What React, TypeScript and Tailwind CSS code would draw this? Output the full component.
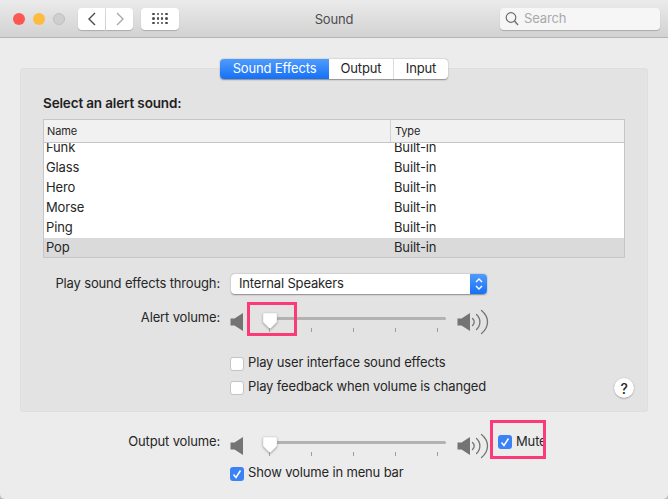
const rows = ["Funk", "Glass", "Hero", "Morse", "Ping", "Pop"];

function SpeakerLow() {
  return (
    <svg width="14" height="20" viewBox="0 0 14 20" className="shrink-0">
      <path d="M0.5 6.5H4.5L13 1V19L4.5 13.5H0.5Z" fill="#747474" />
    </svg>
  );
}

function SpeakerHigh() {
  return (
    <svg width="32" height="26" viewBox="0 0 32 26" className="shrink-0">
      <path d="M0.5 9.5H4.5L13 4V22L4.5 16.5H0.5Z" fill="#747474" />
      <path d="M15.5 9.5C17.8 11.5 17.8 14.5 15.5 16.5" fill="none" stroke="#747474" strokeWidth="1.3" strokeLinecap="round" />
      <path d="M19.5 5.5C24 9.5 24 16.5 19.5 20.5" fill="none" stroke="#747474" strokeWidth="1.3" strokeLinecap="round" />
      <path d="M24.5 1.5C32.5 8 32.5 18 24.5 24.5" fill="none" stroke="#747474" strokeWidth="1.3" strokeLinecap="round" />
    </svg>
  );
}

function Slider() {
  return (
    <div className="relative w-[184px] h-[20px] shrink-0">
      <div className="absolute left-[6px] right-0 top-[5px] h-[3px] rounded-full bg-[#b2b2b2]" />
      <svg width="16" height="18" viewBox="0 0 16 18" className="absolute left-0 top-0 drop-shadow-[0_1px_1px_rgba(0,0,0,0.3)]">
        <path d="M2 1H14Q15 1 15 2V10L8 17L1 10V2Q1 1 2 1Z" fill="#ffffff" stroke="#d0d0d0" strokeWidth="0.5" />
      </svg>
      <div className="absolute left-[7px] right-[8px] top-[16px] flex justify-between">
        {[0, 1, 2, 3, 4].map((i) => (
          <div key={i} className="w-px h-[4px] bg-[#9c9c9c]" />
        ))}
      </div>
    </div>
  );
}

function VolumeRow() {
  return (
    <div className="flex items-center">
      <SpeakerLow />
      <div className="ml-[18px] mr-[11px]">
        <Slider />
      </div>
      <SpeakerHigh />
    </div>
  );
}

function Check({ checked, label }: { checked?: boolean; label: string }) {
  return (
    <div className="flex items-center gap-[4px] h-[16px]">
      {checked ? (
        <div className="w-[14px] h-[14px] rounded-[3px] bg-[#3b82f7] flex items-center justify-center shrink-0">
          <svg width="10" height="10" viewBox="0 0 10 10">
            <path d="M1.5 5.5L4 8.5L8.5 1.5" fill="none" stroke="#ffffff" strokeWidth="1.5" />
          </svg>
        </div>
      ) : (
        <div className="w-[14px] h-[14px] rounded-[3px] bg-white border border-[#c4c4c4] shrink-0" />
      )}
      <span className="whitespace-nowrap mb-[2px]">{label}</span>
    </div>
  );
}

export default function App() {
  return (
    <div className="w-[668px] h-[499px] bg-[#c9baac]">
      <div
        className="relative w-[668px] h-[499px] overflow-hidden bg-[#ececec] text-[13px] tracking-[-0.15px] text-[#262626] rounded-b-[5px]"
        style={{ fontFamily: "Inter, 'Liberation Sans', sans-serif" }}
      >
        {/* Title bar */}
        <div className="relative h-[38px] flex items-center pl-[13px] pr-[8px] bg-gradient-to-b from-[#ebebeb] to-[#d2d2d2] border-b border-[#b4b4b4]">
          <div className="flex items-center gap-[8px]">
            <div className="w-[12px] h-[12px] rounded-full bg-[#fc5753]" />
            <div className="w-[12px] h-[12px] rounded-full bg-[#fdbc40]" />
            <div className="w-[12px] h-[12px] rounded-full bg-[#cfcfcf] border border-[#bfbfbf]" />
          </div>
          <div className="flex ml-[13px] gap-px">
            <div className="w-[27px] h-[22px] bg-white rounded-l-[4px] shadow-[0_1px_1px_rgba(0,0,0,0.2)] flex items-center justify-center">
              <svg width="10" height="14" viewBox="0 0 10 14">
                <path d="M8 1L2 7L8 13" fill="none" stroke="#4a4a4a" strokeWidth="1.4" />
              </svg>
            </div>
            <div className="w-[27px] h-[22px] bg-white rounded-r-[4px] shadow-[0_1px_1px_rgba(0,0,0,0.2)] flex items-center justify-center">
              <svg width="10" height="14" viewBox="0 0 10 14">
                <path d="M2 1L8 7L2 13" fill="none" stroke="#a8a8a8" strokeWidth="1.4" />
              </svg>
            </div>
          </div>
          <div className="ml-[8px] w-[38px] h-[22px] bg-white rounded-[4px] shadow-[0_1px_1px_rgba(0,0,0,0.2)] grid grid-cols-[repeat(4,2.5px)] auto-rows-[2.5px] gap-[1.8px] content-center justify-center">
            {Array.from({ length: 12 }).map((_, i) => (
              <div key={i} className="rounded-full bg-[#4a4a4a]" />
            ))}
          </div>
          <div className="absolute left-0 right-0 mt-[2px] text-center text-[#4d4d4d]">Sound</div>
          <div className="relative ml-auto w-[160px] h-[22px] bg-[#f6f6f6] rounded-[4px] shadow-[0_1px_1px_rgba(0,0,0,0.2)] flex items-center pl-[5px] gap-[5px]">
            <svg width="14" height="15" viewBox="0 0 14 15">
              <circle cx="6" cy="6.5" r="4.8" fill="none" stroke="#6e6e6e" strokeWidth="1.2" />
              <path d="M9.5 10L13 14" stroke="#6e6e6e" strokeWidth="1.3" />
            </svg>
            <span className="text-[#a9a9a9] mt-[1px]">Search</span>
          </div>
        </div>

        {/* Tabbed panel */}
        <div className="relative mx-[20px] mt-[30px] h-[344px] bg-[#e3e3e3] rounded-[4px] px-[23px] shadow-[inset_0_0_0_1px_#dfdfdf]">
          <div className="absolute left-[200px] top-[-9px] h-[20px] flex bg-white rounded-[4px] shadow-[0_0.5px_1.5px_rgba(0,0,0,0.4)]">
            <div className="w-[109px] flex items-center justify-center text-white rounded-l-[4px] bg-gradient-to-b from-[#4d9bfc] to-[#1470f5]">
              Sound Effects
            </div>
            <div className="w-[65px] flex items-center justify-center border-r border-[#dcdcdc]">Output</div>
            <div className="w-[54px] flex items-center justify-center">Input</div>
          </div>

          <div className="pt-[26px] font-semibold text-[13.5px] leading-[18px] text-[#1f1f1f]">Select an alert sound:</div>

          {/* Sound list */}
          <div className="mt-[7px] w-[582px] h-[139px] bg-white border border-[#c6c6c6] flex flex-col overflow-hidden">
            <div className="h-[23px] shrink-0 flex items-center bg-[#f1f1f1] border-b border-[#c6c6c6] text-[11px]">
              <div className="w-[347px] h-full flex items-center pl-[3px] border-r border-[#d2d2d2]">Name</div>
              <div className="pl-[4px]">Type</div>
            </div>
            <div className="flex-1 overflow-hidden">
              <div className="-mt-[5px]">
                {rows.map((r) => (
                  <div key={r} className={`h-[20px] flex items-center ${r === "Pop" ? "bg-[#dadada]" : ""}`}>
                    <div className="w-[350px] pl-[2px]">{r}</div>
                    <div>Built-in</div>
                  </div>
                ))}
              </div>
            </div>
          </div>

          {/* Output device */}
          <div className="mt-[16px] flex items-center h-[20px]">
            <div className="w-[177px] text-right">Play sound effects through:</div>
            <div className="ml-[11px] w-[256px] h-[20px] flex bg-white rounded-[4px] shadow-[0_0.5px_1.5px_rgba(0,0,0,0.4)]">
              <div className="flex-1 pl-[8px] leading-[18px]">Internal Speakers</div>
              <div className="w-[17px] rounded-r-[4px] bg-gradient-to-b from-[#4d9bfc] to-[#1470f5] flex items-center justify-center">
                <svg width="10" height="16" viewBox="0 0 10 16">
                  <path d="M2 6L5 3L8 6M2 10L5 13L8 10" fill="none" stroke="#ffffff" strokeWidth="1.4" />
                </svg>
              </div>
            </div>
          </div>

          <div className="mt-[14px] flex items-center">
            <div className="w-[177px] text-right mb-[8px]">Alert volume:</div>
            <div className="ml-[10px]">
              <VolumeRow />
            </div>
          </div>

          <div className="mt-[20px] ml-[187px] flex flex-col gap-[8px]">
            <Check label="Play user interface sound effects" />
            <Check label="Play feedback when volume is changed" />
          </div>

          <div className="absolute right-[14px] bottom-[14px] w-[20px] h-[20px] rounded-full bg-white shadow-[0_0.5px_1.5px_rgba(0,0,0,0.4)] flex items-center justify-center text-[14px] font-medium">
            ?
          </div>
        </div>

        {/* Output volume */}
        <div className="mt-[20px] pl-[43px] flex items-center">
          <div className="w-[177px] text-right mb-[8px]">Output volume:</div>
          <div className="ml-[10px]">
            <VolumeRow />
          </div>
          <div className="ml-[9px] mb-[7px] w-[48px] overflow-hidden">
            <Check checked label="Mute" />
          </div>
        </div>
        <div className="mt-[6px] ml-[230px]">
          <Check checked label="Show volume in menu bar" />
        </div>

        {/* Annotation boxes */}
        <div className="absolute left-[247px] top-[302px] w-[50px] h-[34px] border-[3px] border-[#fb3b78]" />
        <div className="absolute left-[490px] top-[420px] w-[56px] h-[39px] border-[3px] border-[#fb3b78]" />
      </div>
    </div>
  );
}
